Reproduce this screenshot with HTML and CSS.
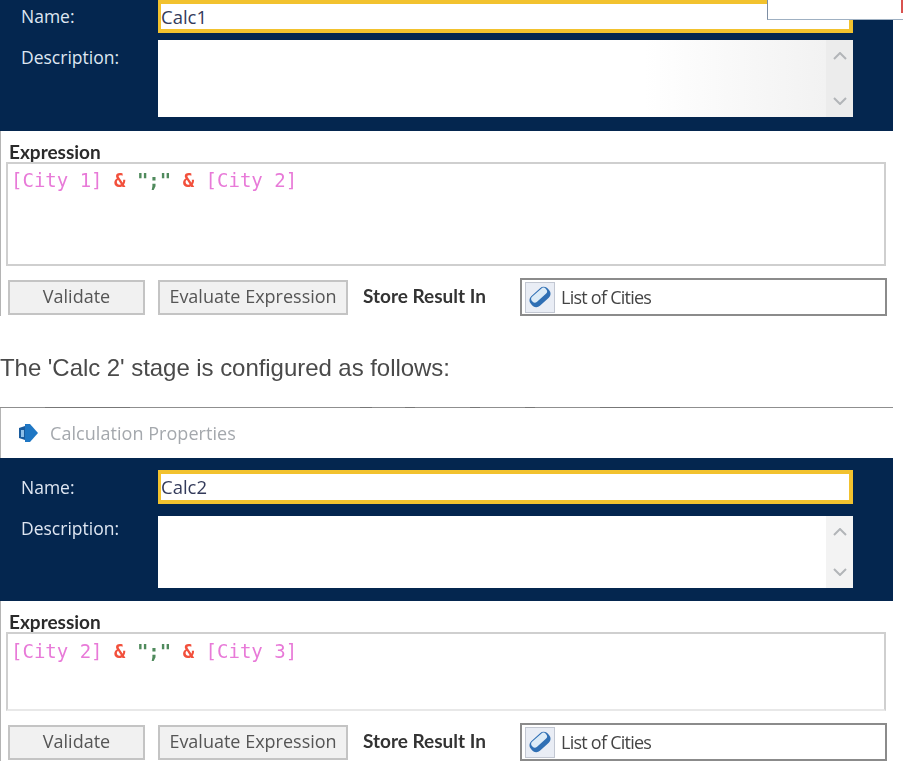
FILE: index.html
```html
<!DOCTYPE html>
<html lang="en">
<head>
<meta charset="utf-8">
<title>Calculation Properties</title>
<link rel="stylesheet" href="styles.css">
</head>
<body>
<main class="page">
  <section class="dialog">
    <div class="popup"><span class="popup-mark"></span></div>
    <div class="navy navy-first">
      <div class="row row-name row-name-first">
        <span class="label">Name:</span>
        <div class="name-input">Calc1</div>
      </div>
      <div class="row">
        <span class="label label-desc">Description:</span>
        <div class="desc-box">
          <div class="scroll">
            <svg class="chev" viewBox="0 0 14 8"><path d="M1 7 7 1l6 6"/></svg>
            <svg class="chev" viewBox="0 0 14 8"><path d="M1 1l6 6 6-6"/></svg>
          </div>
        </div>
      </div>
    </div>
    <div class="body">
      <div class="expr-label">Expression</div>
      <div class="expr-box expr-tall"><span class="f">[City 1]</span> <span class="o">&amp;</span> <span class="s">";"</span> <span class="o">&amp;</span> <span class="f">[City 2]</span></div>
      <div class="actions">
        <div class="btn btn-validate">Validate</div>
        <div class="btn btn-eval">Evaluate Expression</div>
        <div class="store">Store Result In</div>
        <div class="result">
          <span class="result-icon">
            <svg viewBox="0 0 24 24" width="26" height="26"><g transform="rotate(-42 12 12)"><rect class="tag-body" x="1.5" y="6" width="21" height="12" rx="5"/><rect class="tag-top" x="4" y="7" width="17" height="6.5" rx="3"/></g></svg>
          </span>
          <span class="result-text">List of Cities</span>
        </div>
      </div>
    </div>
  </section>

  <p class="caption">The 'Calc 2' stage is configured as follows:</p>

  <section class="dialog dialog-second">
    <div class="rule"></div>
    <div class="titlebar">
      <svg class="app-icon" viewBox="0 0 22 20" width="22" height="20"><path class="app-back" d="M8 1h5l8 9-8 9H8z"/><path class="app-front" d="M2 5l6-2v14l-6-2z"/><path class="app-light" d="M4 7h3v7H4z"/></svg>
      <span class="title">Calculation Properties</span>
    </div>
    <div class="navy navy-second">
      <div class="row row-name">
        <span class="label">Name:</span>
        <div class="name-input name-full">Calc2</div>
      </div>
      <div class="row">
        <span class="label label-desc label-desc-second">Description:</span>
        <div class="desc-box">
          <div class="scroll">
            <svg class="chev" viewBox="0 0 14 8"><path d="M1 7 7 1l6 6"/></svg>
            <svg class="chev" viewBox="0 0 14 8"><path d="M1 1l6 6 6-6"/></svg>
          </div>
        </div>
      </div>
    </div>
    <div class="body">
      <div class="expr-label">Expression</div>
      <div class="expr-box expr-short"><span class="f">[City 2]</span> <span class="o">&amp;</span> <span class="s">";"</span> <span class="o">&amp;</span> <span class="f">[City 3]</span></div>
      <div class="actions">
        <div class="btn btn-validate">Validate</div>
        <div class="btn btn-eval">Evaluate Expression</div>
        <div class="store">Store Result In</div>
        <div class="result">
          <span class="result-icon">
            <svg viewBox="0 0 24 24" width="26" height="26"><g transform="rotate(-42 12 12)"><rect class="tag-body" x="1.5" y="6" width="21" height="12" rx="5"/><rect class="tag-top" x="4" y="7" width="17" height="6.5" rx="3"/></g></svg>
          </span>
          <span class="result-text">List of Cities</span>
        </div>
      </div>
    </div>
  </section>
</main>
</body>
</html>
```
FILE: styles.css
```css
* { box-sizing: border-box; }
html, body { margin: 0; padding: 0; background: #fff; }
body { width: 903px; height: 770px; overflow: hidden; font-family: "Open Sans", "Liberation Sans", sans-serif; color: #333; }
.page { filter: blur(0.6px); }
.dialog { position: relative; width: 893px; }
.popup { position: absolute; left: 767px; top: 0; width: 136px; height: 20px; background: #fff; border-left: 1px solid #7d8ea3; border-bottom: 1px solid #9fb0c2; z-index: 2; }
.popup-mark { position: absolute; right: 0; top: 0; width: 2px; height: 13px; background: #d9524f; }

.navy { background: #04264f; padding-left: 21px; display: flex; flex-direction: column; }
.navy-first { height: 131px; gap: 7px; }
.navy-second { height: 143px; padding-top: 12px; gap: 12px; }
.row { display: flex; align-items: flex-start; }
.label { width: 137px; font-size: 17.5px; line-height: 22px; color: #dfe6f2; letter-spacing: 0; }
.row-name .label { padding-top: 6px; }
.row-name-first .label { padding-top: 5px; }
.label-desc { padding-top: 6px; }
.label-desc-second { padding-top: 1px; }
.name-input { width: 695px; height: 33px; background: #fff; border: 4px solid #f2c22e; border-left-width: 3px; font-size: 18.5px; line-height: 25px; color: #333a5a; letter-spacing: 0; }
.name-full { height: 34px; }
.desc-box { width: 695px; height: 77px; background: linear-gradient(90deg, #fff 70%, #f0f0f0 100%); display: flex; justify-content: flex-end; }
.navy-second .desc-box { height: 72px; background: #fff; }
.scroll { width: 27px; background: #ececec; display: flex; flex-direction: column; justify-content: space-between; align-items: center; padding: 12px 0; }
.navy-second .scroll { background: #f3f3f3; }
.chev { width: 14px; height: 8px; fill: none; stroke: #b2b5b8; stroke-width: 2; }

.body { padding-left: 5px; border-left: 1px solid #b4b4b4; }
.expr-label { font-family: "Lato", "Open Sans", sans-serif; font-weight: 700; font-size: 19px; line-height: 20px; color: #2b2b2b; padding-left: 3px; padding-top: 11px; height: 31px; }
.expr-box { width: 880px; border: 2px solid #cfcfcf; background: #fff; font-family: "DejaVu Sans Mono", monospace; font-size: 19px; line-height: 22px; padding: 5px 0 0 3px; white-space: pre; }
.expr-tall { height: 104px; }
.expr-short { height: 79px; border-bottom-color: #e8e8e8; padding-top: 6px; }
.f { color: #e87ad8; }
.o { color: #f2503c; font-weight: 700; }
.s { color: #4f8a5c; font-weight: 700; }

.actions { display: flex; align-items: center; height: 38px; margin-top: 12px; padding-left: 2px; }
.btn { height: 35px; background: #f1f1f1; border: 2px solid #c4c4c4; display: flex; align-items: center; justify-content: center; font-size: 18px; line-height: 24px; padding-bottom: 3px; color: #555; letter-spacing: 0; }
.btn-validate { width: 137px; }
.btn-eval { width: 190px; margin-left: 13px; }
.store { width: 157px; margin-left: 15px; font-family: "Lato", "Open Sans", sans-serif; font-weight: 700; font-size: 19px; line-height: 22px; padding-bottom: 3px; color: #333; }
.result { width: 367px; height: 38px; border: 2px solid #8b8b8b; background: #fff; display: flex; align-items: center; padding-left: 3px; }
.result-icon { width: 30px; height: 31px; background: #e9edf5; border: 1px solid #c2c7d2; display: flex; align-items: center; justify-content: center; }
.result-text { margin-left: 6px; font-size: 18px; letter-spacing: -0.75px; color: #444; }
.tag-body { fill: #2f6fb4; }
.tag-top { fill: #dcebf7; }

.caption { margin: 0; width: 903px; height: 91px; padding-top: 38px; font-family: "Liberation Sans", sans-serif; font-size: 24px; line-height: 28px; color: #4a4a4a; letter-spacing: -0.05px; }

.rule { height: 1px; background-color: #8f8f8f; background-image: linear-gradient(90deg, transparent 45px, #777 45px, #777 130px, transparent 130px, transparent 360px, #777 360px, #777 372px, transparent 372px, transparent 405px, #777 405px, #777 415px, transparent 415px, transparent 470px, #777 470px, #777 480px, transparent 480px, transparent 525px, #777 525px, #777 535px, transparent 535px, transparent 600px, #777 600px, #777 680px, transparent 680px); }
.titlebar { height: 50px; display: flex; align-items: center; padding-left: 16px; gap: 11px; background: #fff; border-left: 1px solid #b4b4b4; }
.app-back { fill: #1f77c4; }
.app-front { fill: #1a5c9e; }
.app-light { fill: #8fc0e8; }
.title { font-size: 18px; color: #a4a8ad; letter-spacing: 0.05px; }
```
